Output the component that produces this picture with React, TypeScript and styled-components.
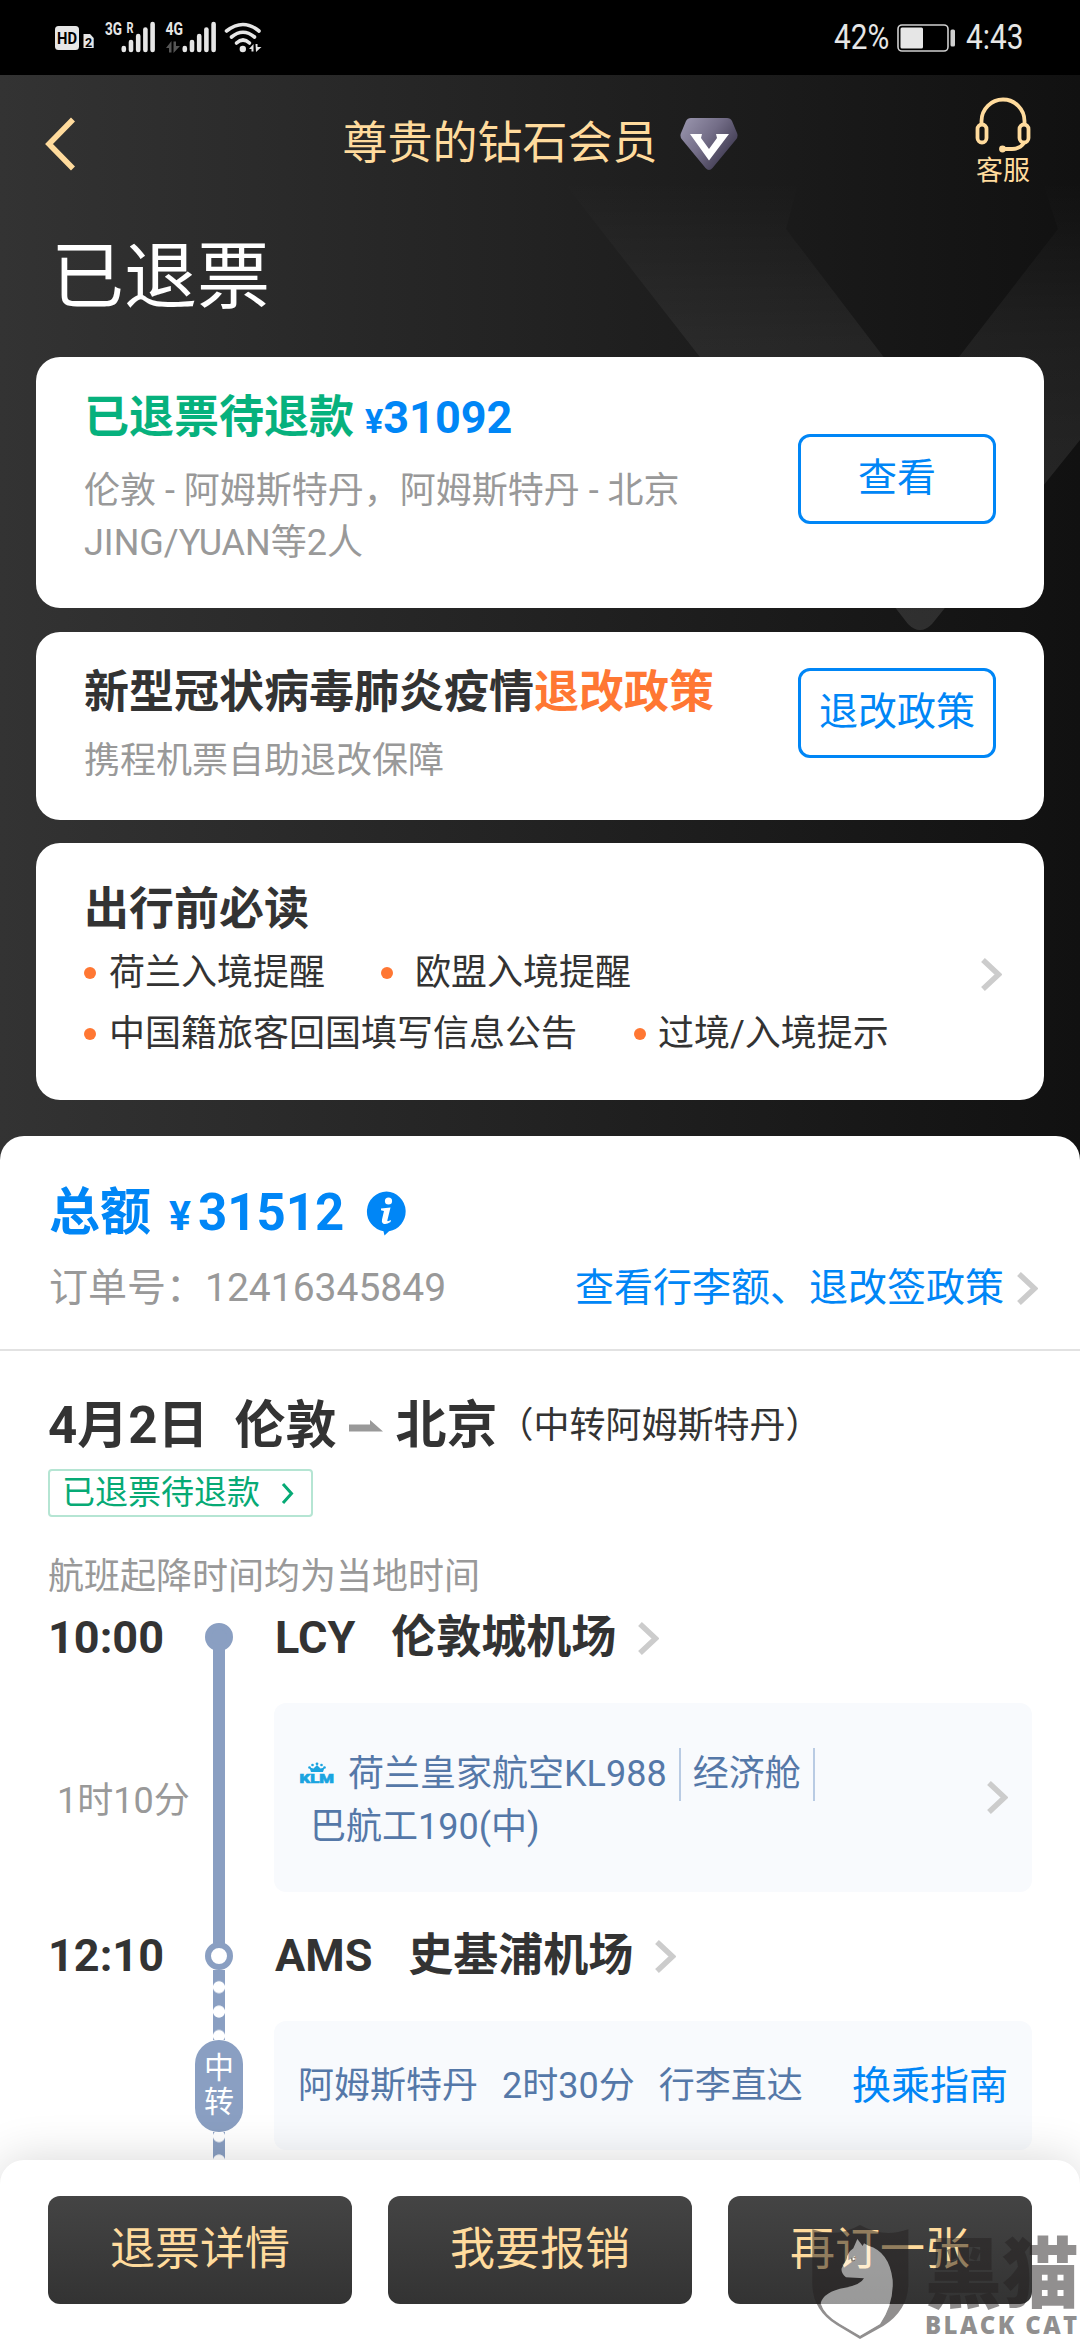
import React from "react";
import styled, { createGlobalStyle } from "styled-components";

const GlobalStyle = createGlobalStyle`
  * { box-sizing: border-box; }
  body {
    margin: 0;
    background: #fff;
    font-family: Roboto, "Noto Sans CJK SC", sans-serif;
    color: #333;
  }
`;

const gold = "#ffdb9d";
const blue = "#0086f6";
const grey = "#999";
const slate = "#5578a8";
const railColor = "#8a9fc2";

const Screen = styled.div`
  position: relative;
  width: 1080px;
  height: 2340px;
  overflow: hidden;
  display: flex;
  flex-direction: column;
  white-space: nowrap;
`;

/* ---------- status bar ---------- */

const StatusBar = styled.div`
  flex: none;
  height: 75px;
  background: #000;
  display: flex;
  justify-content: space-between;
  align-items: center;
  padding-right: 57px;
`;

const StatusRight = styled.div`
  display: flex;
  align-items: center;
  gap: 10px;
  height: 75px;
`;

const StatusText = styled.span<{ $w: number }>`
  width: ${(p) => p.$w}px;
  font-size: 35px;
  line-height: 75px;
  color: #e6e6e6;
  transform: scaleX(0.85);
  transform-origin: left center;
`;

/* ---------- hero ---------- */

const Hero = styled.div`
  position: relative;
  flex: none;
  height: 1097px;
  background: linear-gradient(90deg, #333 0%, #222 50%, #111 100%);
`;

const HeroPattern = styled.svg`
  position: absolute;
  left: 0;
  top: 0;
`;

const HeroBody = styled.div`
  position: relative;
  padding: 0 36px;
`;

const NavBar = styled.div`
  height: 138px;
  display: grid;
  grid-template-columns: 1fr auto 1fr;
  align-items: center;
`;

const BackButton = styled.div`
  display: flex;
  padding-left: 8px;
`;

const NavTitle = styled.div`
  display: flex;
  align-items: center;
  gap: 22px;
  font-size: 45px;
  line-height: 60px;
  color: ${gold};
`;

const Service = styled.div`
  justify-self: end;
  width: 82px;
  display: flex;
  flex-direction: column;
  align-items: center;
  gap: 1px;
  font-size: 27px;
  line-height: 34px;
  color: ${gold};
  padding-bottom: 4px;
`;

const PageTitle = styled.h1`
  margin: 14px 0 30px 15px;
  font-size: 73px;
  font-weight: 400;
  line-height: 100px;
  color: #fff;
`;

const Card = styled.section<{ $h: number; $pt: number }>`
  display: flex;
  justify-content: space-between;
  height: ${(p) => p.$h}px;
  padding: ${(p) => p.$pt}px 48px 0;
  margin-bottom: 23.5px;
  background: #fff;
  border-radius: 24px;
`;

const CardHeading = styled.h2<{ $color?: string }>`
  margin: 0;
  font-size: 45px;
  font-weight: 700;
  line-height: 60px;
  color: ${(p) => p.$color || "#333"};
`;

const Price = styled.span`
  color: ${blue};
  margin-left: 11px;
`;

const Yen = styled.span<{ $s: number }>`
  font-size: ${(p) => p.$s}px;
`;

const Accent = styled.span`
  color: #ff7733;
`;

const CardText = styled.p<{ $mt: number }>`
  margin: ${(p) => p.$mt}px 0 0;
  font-size: 36px;
  line-height: 52px;
  color: ${grey};
`;

const OutlineButton = styled.button<{ $mt: number }>`
  width: 198px;
  height: 90px;
  margin: ${(p) => p.$mt}px 0 0;
  padding: 0 0 2px;
  border: 3px solid ${blue};
  border-radius: 12px;
  background: #fff;
  font: 400 39px/82px Roboto, "Noto Sans CJK SC", sans-serif;
  color: ${blue};
`;

const TipRow = styled.div<{ $gap: number }>`
  display: flex;
  gap: ${(p) => p.$gap}px;
  height: 61px;
`;

const Tip = styled.span<{ $gap?: number }>`
  display: flex;
  align-items: center;
  gap: ${(p) => p.$gap || 13}px;
  font-size: 36px;
  line-height: 60px;

  &::before {
    content: "";
    width: 12px;
    height: 12px;
    border-radius: 50%;
    background: #ff7733;
  }
`;

const Tips = styled.div`
  margin-top: 2px;
`;

const ChevronSlot = styled.div<{ $mt: number; $mr?: number }>`
  margin-top: ${(p) => p.$mt}px;
  margin-right: ${(p) => p.$mr || 0}px;
`;

/* ---------- order sheet ---------- */

const Sheet = styled.main`
  position: relative;
  margin-top: -36px;
  flex: 1;
  background: #fff;
  border-radius: 24px 24px 0 0;
`;

const Summary = styled.div`
  height: 215px;
  padding: 42px 42px 0 49px;
  border-bottom: 2px solid #e2e2e2;
`;

const Total = styled.div`
  display: flex;
  align-items: center;
  font-size: 51px;
  font-weight: 700;
  line-height: 70px;
  color: ${blue};
`;

const TotalYen = styled.span`
  font-size: 41px;
  line-height: 64px;
  margin: 6px 7px 0 18px;
`;

const TotalDigits = styled.span`
  margin-right: 22px;
`;

const OrderRow = styled.div`
  margin-top: 10px;
  display: flex;
  justify-content: space-between;
  font-size: 39px;
  line-height: 60px;
  color: ${grey};
`;

const PolicyLink = styled.span`
  display: flex;
  align-items: center;
  gap: 13px;
  color: ${blue};
`;

const Route = styled.div`
  padding: 40px 0 0 48px;
  display: flex;
  align-items: center;
  font-size: 51px;
  font-weight: 700;
  line-height: 70px;
`;

const RouteDate = styled.span`
  margin-right: 26px;
`;

const RouteVia = styled.span`
  font-size: 36px;
  font-weight: 400;
`;

const ArrowBox = styled.svg`
  margin: 0 12.5px;
`;

const RefundTag = styled.div`
  width: 265px;
  height: 48px;
  margin: 8px 0 0 48px;
  padding: 0 16px 0 12px;
  display: flex;
  align-items: center;
  justify-content: space-between;
  border: 2px solid #b5e5d3;
  border-radius: 4px;
  font-size: 33px;
  line-height: 44px;
  color: #06aa75;
`;

const LocalTimeNote = styled.p`
  margin: 35px 0 6px 48px;
  font-size: 36px;
  line-height: 50px;
  color: ${grey};
`;

const Timeline = styled.div`
  display: grid;
  grid-template-columns: 147px 48px 31px 758px;
  grid-template-rows: 60px 35px 189px 34px 60px 35px 129px 20px;
  padding-left: 48px;
`;

const Time = styled.div<{ $row: number }>`
  grid-column: 1;
  grid-row: ${(p) => p.$row};
  font-size: 45px;
  font-weight: 700;
  line-height: 60px;
`;

const Duration = styled.div`
  grid-column: 1;
  grid-row: 3;
  align-self: center;
  padding: 7px 0 0 9px;
  font-size: 36px;
  line-height: 50px;
  color: ${grey};
`;

const Rail = styled.div`
  grid-column: 2;
  grid-row: 1 / -1;
  display: flex;
  flex-direction: column;
  align-items: center;
  padding-top: 15px;
`;

const Stop = styled.div<{ $open?: boolean }>`
  flex: none;
  width: 28px;
  height: 28px;
  border-radius: 50%;
  border: 6.5px solid ${railColor};
  background: ${(p) => (p.$open ? "#fff" : railColor)};
`;

const Segment = styled.div<{ $h: number }>`
  flex: none;
  width: 12px;
  height: ${(p) => p.$h}px;
  margin: -3px 0;
  background: ${railColor};
`;

const DottedSegment = styled.div<{ $h: number; $shift: number }>`
  flex: none;
  width: 12px;
  height: ${(p) => p.$h}px;
  background: radial-gradient(circle at center, #fff 0 5.6px, ${railColor} 6.4px) 0
    ${(p) => p.$shift}px / 12px 24.4px;
`;

const TransferPill = styled.div`
  flex: none;
  width: 48px;
  height: 92px;
  padding: 11px 9px 0;
  border-radius: 24px;
  background: ${railColor};
  font-size: 30px;
  line-height: 34px;
  color: #fff;
  white-space: normal;
`;

const Station = styled.div<{ $row: number }>`
  grid-column: 4;
  grid-row: ${(p) => p.$row};
  display: flex;
  align-items: center;
  font-size: 45px;
  font-weight: 700;
  line-height: 60px;
  padding-left: 1px;
`;

const StationName = styled.span`
  margin: 0 22px 0 36px;
`;

const FlightCard = styled.div`
  grid-column: 4;
  grid-row: 3;
  display: flex;
  justify-content: space-between;
  align-items: center;
  padding: 0 24px 0 25px;
  border-radius: 12px;
  background: #f8fafd;
  font-size: 36px;
  line-height: 53px;
  color: ${slate};
`;

const FlightInfo = styled.div`
  padding-top: 6px;
`;

const FlightLine = styled.div`
  display: flex;
  align-items: center;
`;

const Carrier = styled.span`
  margin: 0 12px 0 13px;
`;

const Cabin = styled.span`
  padding: 0 12px;
  border: solid #b9cbe3;
  border-width: 0 2px;
`;

const Aircraft = styled.div`
  padding-left: 11px;
`;

const TransferCard = styled.div`
  grid-column: 4;
  grid-row: 7;
  display: flex;
  align-items: center;
  padding: 0 24px;
  border-radius: 12px;
  background: #f8fafd;
  font-size: 36px;
  line-height: 60px;
  color: ${slate};
`;

const TransferItem = styled.span`
  margin-right: 24px;
`;

const GuideLink = styled.span`
  margin-left: auto;
  font-size: 39px;
  color: ${blue};
`;

/* ---------- bottom actions ---------- */

const ActionBar = styled.footer`
  position: absolute;
  left: 0;
  right: 0;
  bottom: 0;
  height: 180px;
  padding: 36px 48px;
  display: grid;
  grid-template-columns: repeat(3, 1fr);
  gap: 36px;
  background: #fff;
  border-radius: 24px 24px 0 0;
  box-shadow: 0 0 48px rgba(0, 0, 0, 0.16);
`;

const ActionButton = styled.button`
  height: 108px;
  padding: 0;
  border: 0;
  border-radius: 12px;
  background: linear-gradient(#444, #333);
  font: 400 45px/108px Roboto, "Noto Sans CJK SC", sans-serif;
  color: ${gold};
`;

const Watermark = styled.div`
  position: absolute;
  left: 800px;
  top: 2220px;
  width: 280px;
  height: 120px;
  padding: 13px 0 0 125px;
  color: rgba(35, 31, 32, 0.5);
`;

const WatermarkArt = styled.svg`
  position: absolute;
  left: 0;
  top: 0;
`;

const WatermarkName = styled.div`
  font: 900 77px/72px "Noto Sans CJK SC", sans-serif;
`;

const WatermarkLatin = styled.div`
  margin-top: 6px;
  font: 800 24px/28px "Open Sans", sans-serif;
  letter-spacing: 2.4px;
`;

/* ---------- icons ---------- */

const Chevron = ({ w = 21, h = 33, color = "#ccc", stroke = 5.5 }) => (
  <svg width={w} height={h} viewBox={`0 0 ${w} ${h}`} style={{ display: "block" }}>
    <path
      d={`M2 2 L${w - 3.5} ${h / 2} L2 ${h - 2}`}
      fill="none"
      stroke={color}
      strokeWidth={stroke}
    />
  </svg>
);

const Bars = ({ x }: { x: number }) => (
  <g stroke="#e6e6e6" strokeWidth="4.6" strokeLinecap="round">
    {[48, 42, 36, 29.5, 24].map((y, i) => (
      <path key={y} d={`M${x + i * 7.2} ${y} V50`} />
    ))}
  </g>
);

const StatusIcons = () => (
  <svg width="280" height="75" viewBox="0 0 280 75" fill="#e6e6e6" fontFamily="Roboto" fontWeight="700">
    <rect x="55" y="26" width="24" height="24" rx="3.5" />
    <text x="57" y="43.5" fontSize="16" fill="#000" textLength="20" lengthAdjust="spacingAndGlyphs">HD</text>
    <path d="M83.5 34 H90 L93.7 38 V48 H83.5Z" />
    <text x="85" y="46.5" fontSize="12.5" fill="#000">2</text>
    <text x="105" y="35" fontSize="18" textLength="17" lengthAdjust="spacingAndGlyphs">3G</text>
    <text x="126.5" y="33" fontSize="15" textLength="7" lengthAdjust="spacingAndGlyphs">R</text>
    <Bars x={123.8} />
    <text x="165.5" y="35" fontSize="18" textLength="17.5" lengthAdjust="spacingAndGlyphs">4G</text>
    <g fill="#555">
      <path d="M166 48 L171.500 41 V52.500 H169 V48Z" />
      <path d="M173.500 41.500 H176 V46 H180 L173.500 53Z" />
    </g>
    <Bars x={184.800} />
    <g fill="none" stroke="#e6e6e6" strokeWidth="3.600" strokeLinecap="round">
      <path d="M226.500 31 Q243 18 259 31" />
      <path d="M231.500 37 Q243 27.500 254.500 37" />
      <path d="M236.500 43 Q243 37 249.500 43" />
    </g>
    <circle cx="242.800" cy="49" r="3.200" />
    <path d="M249 49 L253.500 44 V51.500 H251.500 V49Z" />
    <path d="M255.500 44 H257.500 V47 H261.500 L256 52Z" />
  </svg>
);

const Battery = () => (
  <svg width="59" height="28" viewBox="0 0 59 28">
    <rect x="1" y="1" width="50" height="26" rx="4" fill="none" stroke="#cfcfcf" strokeWidth="1.600" />
    <rect x="3.500" y="3.500" width="22.500" height="21" rx="1.500" fill="#e6e6e6" />
    <rect x="53.500" y="5.500" width="4.500" height="17" rx="1.500" fill="#cfcfcf" />
  </svg>
);

const Diamond = () => (
  <svg width="58" height="54" viewBox="0 0 58 54">
    <defs>
      <linearGradient id="gem" x1="0" y1="0" x2="1" y2="0.700">
        <stop offset="0" stopColor="#9c98b0" />
        <stop offset="0.500" stopColor="#736d87" />
        <stop offset="1" stopColor="#383349" />
      </linearGradient>
    </defs>
    <path
      d="M11 1 H47 Q50.500 1 52 4 L57 16 Q58.500 19.500 56 22.500 L32.500 51 Q29 55 25.500 51 L2 22.500 Q-0.500 19.500 1 16 L6 4 Q7.500 1 11 1Z"
      fill="url(#gem)"
    />
    <path d="M10 17 H22 L21 21 L29 32 L37 21 L36 17 H49 L29 43.500Z" fill="#fff" />
  </svg>
);

const Headset = () => (
  <svg width="56" height="56" viewBox="0 0 56 56" fill="none" stroke={gold} strokeWidth="3.800">
    <path d="M6.500 26 V24 A21.500 21.500 0 0 1 49.500 24 V26" />
    <rect x="2.500" y="27.500" width="9" height="18" rx="4.500" />
    <rect x="44.500" y="27.500" width="9" height="18" rx="4.500" />
    <path d="M49 46 Q45 52 37 52 H28" />
    <circle cx="27.500" cy="52" r="2.600" fill={gold} stroke="none" />
    <circle cx="27.500" cy="52" r="1.500" />
  </svg>
);

const InfoIcon = () => (
  <svg width="41" height="45" viewBox="0 0 41 45">
    <path d="M20.500 0.500 A20 20 0 0 1 23 40.200 L18.500 44.500 L17.500 40.200 A20 20 0 0 1 20.500 0.500Z" fill={blue} />
    <circle cx="22.500" cy="10" r="3.600" fill="#fff" />
    <path d="M15 17.500 L24.500 16.500 L21.300 29.500 Q21.300 31 25 29 L24.500 31 Q20 34 17 32.500 Q15.300 31.500 16 28.500 L18 20 L15 19.200Z" fill="#fff" />
  </svg>
);

const KlmLogo = () => (
  <svg width="36" height="26" viewBox="0 -1 36 26" fill="#1ba4e0">
    <circle cx="18" cy="1.800" r="1.400" />
    <circle cx="13.500" cy="3" r="1.300" />
    <circle cx="22.500" cy="3" r="1.300" />
    <circle cx="10.500" cy="5.500" r="1.300" />
    <circle cx="25.500" cy="5.500" r="1.300" />
    <path d="M10.500 5.500 L14.500 6.500 L18 3 L21.500 6.500 L25.500 5.500 L24 10 H12Z" />
    <text x="0.500" y="20.800" fontFamily="Roboto" fontWeight="900" fontSize="12.500" textLength="34.500" lengthAdjust="spacingAndGlyphs" stroke="#1ba4e0" strokeWidth="0.600">KLM</text>
  </svg>
);

export default function App() {
  return (
    <Screen>
      <GlobalStyle />
      <StatusBar>
        <StatusIcons />
        <StatusRight>
          <StatusText $w={53}>42%</StatusText>
          <Battery />
          <StatusText $w={57}>4:43</StatusText>
        </StatusRight>
      </StatusBar>

      <Hero>
        <HeroPattern width="1080" height="600" viewBox="0 75 1080 600">
          <defs>
            <linearGradient id="facet" gradientUnits="userSpaceOnUse" x1="0" y1="180" x2="0" y2="630">
              <stop offset="0" stopColor="#fff" stopOpacity="0" />
              <stop offset="0.350" stopColor="#fff" stopOpacity="0.055" />
              <stop offset="1" stopColor="#fff" stopOpacity="0.110" />
            </linearGradient>
          </defs>
          <path
            d="M562 180 H799 L786 229 L921 406 L1058 229 L1042 180 H1080 V440 L932 624 Q920 636 908 624Z"
            fill="url(#facet)"
          />
        </HeroPattern>
        <HeroBody>
          <NavBar>
            <BackButton>
              <svg width="32" height="54" viewBox="0 0 32 54">
                <path d="M29 2.500 L5 27 L29 51.500" fill="none" stroke={gold} strokeWidth="5.600" />
              </svg>
            </BackButton>
            <NavTitle>
              尊贵的钻石会员
              <Diamond />
            </NavTitle>
            <Service>
              <Headset />
              客服
            </Service>
          </NavBar>
          <PageTitle>已退票</PageTitle>

          <Card $h={251} $pt={31}>
            <div>
              <CardHeading $color="#06b17d">
                已退票待退款
                <Price>
                  <Yen $s={34}>¥</Yen>31092
                </Price>
              </CardHeading>
              <CardText $mt={14}>
                伦敦 - 阿姆斯特丹，阿姆斯特丹 - 北京
                <br />
                JING/YUAN等2人
              </CardText>
            </div>
            <OutlineButton $mt={46}>查看</OutlineButton>
          </Card>

          <Card $h={188} $pt={31}>
            <div>
              <CardHeading>
                新型冠状病毒肺炎疫情<Accent>退改政策</Accent>
              </CardHeading>
              <CardText $mt={12}>携程机票自助退改保障</CardText>
            </div>
            <OutlineButton $mt={5}>退改政策</OutlineButton>
          </Card>

          <Card $h={257} $pt={37}>
            <div>
              <CardHeading>出行前必读</CardHeading>
              <Tips>
                <TipRow $gap={56}>
                  <Tip>荷兰入境提醒</Tip>
                  <Tip $gap={22}>欧盟入境提醒</Tip>
                </TipRow>
                <TipRow $gap={57}>
                  <Tip>中国籍旅客回国填写信息公告</Tip>
                  <Tip $gap={12}>过境/入境提示</Tip>
                </TipRow>
              </Tips>
            </div>
            <ChevronSlot $mt={78} $mr={-6}>
              <Chevron />
            </ChevronSlot>
          </Card>
        </HeroBody>
      </Hero>

      <Sheet>
        <Summary>
          <Total>
            总额
            <TotalYen>¥</TotalYen>
            <TotalDigits>31512</TotalDigits>
            <InfoIcon />
          </Total>
          <OrderRow>
            <span>订单号：12416345849</span>
            <PolicyLink>
              查看行李额、退改签政策
              <Chevron />
            </PolicyLink>
          </OrderRow>
        </Summary>

        <Route>
          <RouteDate>4月2日</RouteDate>
          伦敦
          <ArrowBox width="34" height="12" viewBox="0 0 34 12">
            <path d="M0 4.500 H21 V0 L34 11.500 H0Z" fill="#999" />
          </ArrowBox>
          北京
          <RouteVia>（中转阿姆斯特丹）</RouteVia>
        </Route>
        <RefundTag>
          已退票待退款
          <Chevron w={14} h={23} color="#06aa75" stroke={3} />
        </RefundTag>
        <LocalTimeNote>航班起降时间均为当地时间</LocalTimeNote>

        <Timeline>
          <Time $row={1}>10:00</Time>
          <Duration>1时10分</Duration>
          <Time $row={5}>12:10</Time>

          <Rail>
            <Stop />
            <Segment $h={297} />
            <Stop $open />
            <DottedSegment $h={70} $shift={5} />
            <TransferPill>中转</TransferPill>
            <DottedSegment $h={35} $shift={-8} />
          </Rail>

          <Station $row={1}>
            LCY<StationName>伦敦城机场</StationName>
            <Chevron />
          </Station>
          <FlightCard>
            <FlightInfo>
              <FlightLine>
                <KlmLogo />
                <Carrier>荷兰皇家航空KL988</Carrier>
                <Cabin>经济舱</Cabin>
              </FlightLine>
              <Aircraft>巴航工190(中)</Aircraft>
            </FlightInfo>
            <Chevron />
          </FlightCard>
          <Station $row={5}>
            AMS<StationName>史基浦机场</StationName>
            <Chevron />
          </Station>
          <TransferCard>
            <TransferItem>阿姆斯特丹</TransferItem>
            <TransferItem>2时30分</TransferItem>
            <TransferItem>行李直达</TransferItem>
            <GuideLink>换乘指南</GuideLink>
          </TransferCard>
        </Timeline>
      </Sheet>

      <ActionBar>
        <ActionButton>退票详情</ActionButton>
        <ActionButton>我要报销</ActionButton>
        <ActionButton>再订一张</ActionButton>
      </ActionBar>

      <Watermark>
        <WatermarkArt width="280" height="120" viewBox="0 0 840 360">
          <path
            fillRule="evenodd"
            fill="#231f20"
            fillOpacity="0.500"
            d="M37 28 Q110 55 180 15 Q250 55 325 28 V190 Q325 270 250 318 L180 357 L110 315 Q37 270 37 190Z
               M172 57 L160 85 Q142 98 140 118 L125 145 Q122 158 138 172 L192 175 Q182 195 135 203 Q70 215 62 250 Q72 285 120 312 L180 347 L240 312 Q282 250 278 180 Q268 95 205 77 L192 70 L188 78Z"
          />
          <path
            fill="#fff"
            fillOpacity="0.500"
            d="M172 57 L160 85 Q142 98 140 118 L125 145 Q122 158 138 172 L192 175 Q182 195 135 203 Q70 215 62 250 Q72 285 120 312 L180 347 L240 312 Q282 250 278 180 Q268 95 205 77 L192 70 L188 78Z"
          />
          <path d="M152 114 L167 110 L165 122 L155 125Z" fill="#55504c" fillOpacity="0.700" />
          <circle cx="161" cy="117" r="3.500" fill="#fff" />
        </WatermarkArt>
        <WatermarkName>黑猫</WatermarkName>
        <WatermarkLatin>BLACK CAT</WatermarkLatin>
      </Watermark>
    </Screen>
  );
}
